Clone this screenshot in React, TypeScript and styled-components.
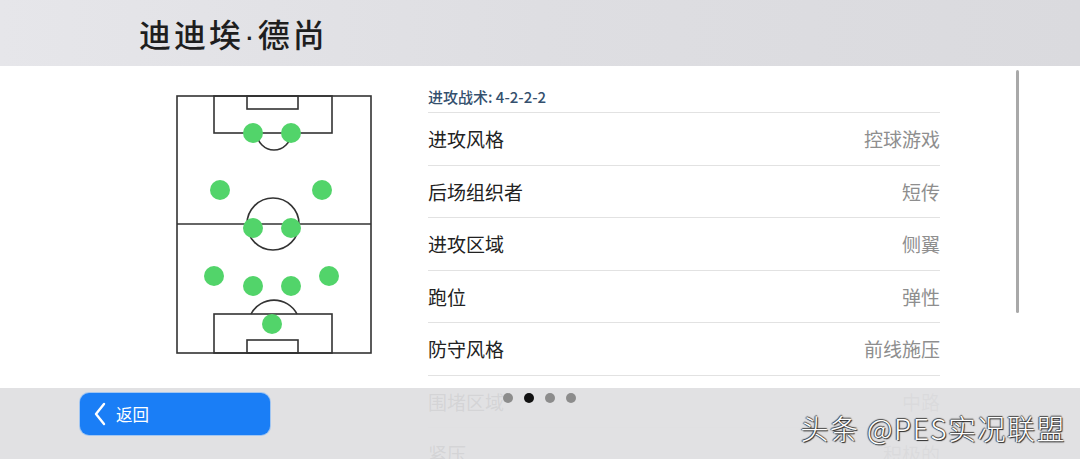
import React from 'react'
import styled, { createGlobalStyle } from 'styled-components'

const Global = createGlobalStyle`
  html, body { margin: 0; padding: 0; background: #fff; }
  body { font-family: "Noto Sans CJK SC", "Noto Sans", sans-serif; }
`

const Page = styled.div`
  position: relative;
  width: 1080px;
  height: 459px;
  overflow: hidden;
  background: #fff;
`

const Header = styled.header`
  height: 66px;
  display: flex;
  align-items: center;
  padding-left: 139px;
  background: linear-gradient(90deg, #e6e6ea 0%, #dedee2 50%, #dadade 100%);
`

const Title = styled.h1`
  margin: 0;
  font-family: "Liberation Sans", "Noto Sans CJK SC", sans-serif;
  font-size: 32px;
  font-weight: 500;
  color: #1e1e1e;
  letter-spacing: 3px;
`

const Body = styled.main`
  display: flex;
  height: 393px;
`

const PitchCol = styled.div`
  width: 428px;
  padding: 29px 0 0 176px;
  box-sizing: border-box;
`

const List = styled.section`
  width: 512px;
  padding-top: 20px;
`

const Tactic = styled.div`
  height: 27px;
  font-size: 15px;
  font-weight: 500;
  color: #34506e;
  border-bottom: 1px solid #e2e2e2;
  box-sizing: border-box;
  line-height: 22px;
`

const Row = styled.div`
  height: 52.5px;
  display: flex;
  align-items: center;
  justify-content: space-between;
  border-bottom: 1px solid #e2e2e2;
  box-sizing: border-box;
`

const Label = styled.span`
  font-size: 19px;
  color: #222;
`

const Value = styled.span`
  font-size: 19px;
  color: #8e8e8e;
`

const ScrollBar = styled.div`
  margin: 4px 0 0 76px;
  width: 3px;
  height: 243px;
  border-radius: 2px;
  background: #a9a9a9;
`

const Footer = styled.footer`
  position: absolute;
  left: 0;
  right: 0;
  bottom: 0;
  height: 71px;
  background: rgba(223, 223, 225, 0.94);
  display: flex;
  align-items: flex-start;
  padding: 5px 0 0 80px;
  box-sizing: border-box;
`

const BackButton = styled.button`
  width: 190px;
  height: 42px;
  border: none;
  border-radius: 9px;
  background: #1a7ef6;
  color: #fff;
  display: flex;
  align-items: center;
  gap: 9px;
  padding: 0 0 0 13px;
  font-family: inherit;
  font-size: 16.5px;
  box-shadow: 0 0 0 1px rgba(120, 180, 250, 0.6);
`

const Dots = styled.div`
  display: flex;
  gap: 11px;
  margin: 0 0 0 233px;
`

const Dot = styled.span<{ $active?: boolean }>`
  width: 10px;
  height: 10px;
  border-radius: 50%;
  background: ${(p) => (p.$active ? '#111' : '#8c8c8c')};
`

const Watermark = styled.div`
  margin: 15px 0 0 auto;
  padding-right: 14px;
  font-family: "Noto Sans CJK SC", sans-serif;
  font-size: 28px;
  font-weight: 300;
  letter-spacing: 1.5px;
  color: #fff;
  text-shadow: 1px 1px 1px #222, -1px 0 1px #444, 0 -1px 1px #444;
`

const rows: [string, string][] = [
  ['进攻风格', '控球游戏'],
  ['后场组织者', '短传'],
  ['进攻区域', '侧翼'],
  ['跑位', '弹性'],
  ['防守风格', '前线施压'],
  ['围堵区域', '中路'],
  ['紧压', '积极的'],
]

// 球员位置（相对球场 svg）
const players = [
  [77, 38], [115, 38],
  [44, 95], [146, 95],
  [77, 133], [115, 133],
  [38, 181], [77, 191], [115, 191], [153, 181],
  [96, 229],
]

function Pitch() {
  const s = { fill: 'none', stroke: '#333', strokeWidth: 1.6 }
  return (
    <svg width="196" height="260" viewBox="0 0 196 260">
      <rect x="1" y="1" width="194" height="257" {...s} />
      <line x1="1" y1="129" x2="195" y2="129" {...s} />
      <circle cx="97" cy="129" r="26" {...s} />
      <rect x="38" y="1" width="118" height="37" {...s} />
      <rect x="71" y="1" width="51" height="13" {...s} />
      <path d="M81 38 A17 17 0 0 0 115 38" {...s} />
      <rect x="38" y="219" width="118" height="39" {...s} />
      <rect x="71" y="245" width="51" height="13" {...s} />
      <path d="M75 219 A26 26 0 0 1 121 219" {...s} />
      {players.map(([x, y], i) => (
        <circle key={i} cx={x} cy={y} r="10" fill="#52d46a" />
      ))}
    </svg>
  )
}

export default function App() {
  return (
    <Page>
      <Global />
      <Header>
        <Title>迪迪埃·德尚</Title>
      </Header>
      <Body>
        <PitchCol>
          <Pitch />
        </PitchCol>
        <List>
          <Tactic>进攻战术: 4-2-2-2</Tactic>
          {rows.map(([k, v]) => (
            <Row key={k}>
              <Label>{k}</Label>
              <Value>{v}</Value>
            </Row>
          ))}
        </List>
        <ScrollBar />
      </Body>
      <Footer>
        <BackButton>
          <svg width="14" height="24" viewBox="0 0 14 24">
            <path d="M11 2 L3 12 L11 22" fill="none" stroke="#fff" strokeWidth="2.4" strokeLinecap="round" strokeLinejoin="round" />
          </svg>
          返回
        </BackButton>
        <Dots>
          <Dot />
          <Dot $active />
          <Dot />
          <Dot />
        </Dots>
        <Watermark>头条 @PES实况联盟</Watermark>
      </Footer>
    </Page>
  )
}
